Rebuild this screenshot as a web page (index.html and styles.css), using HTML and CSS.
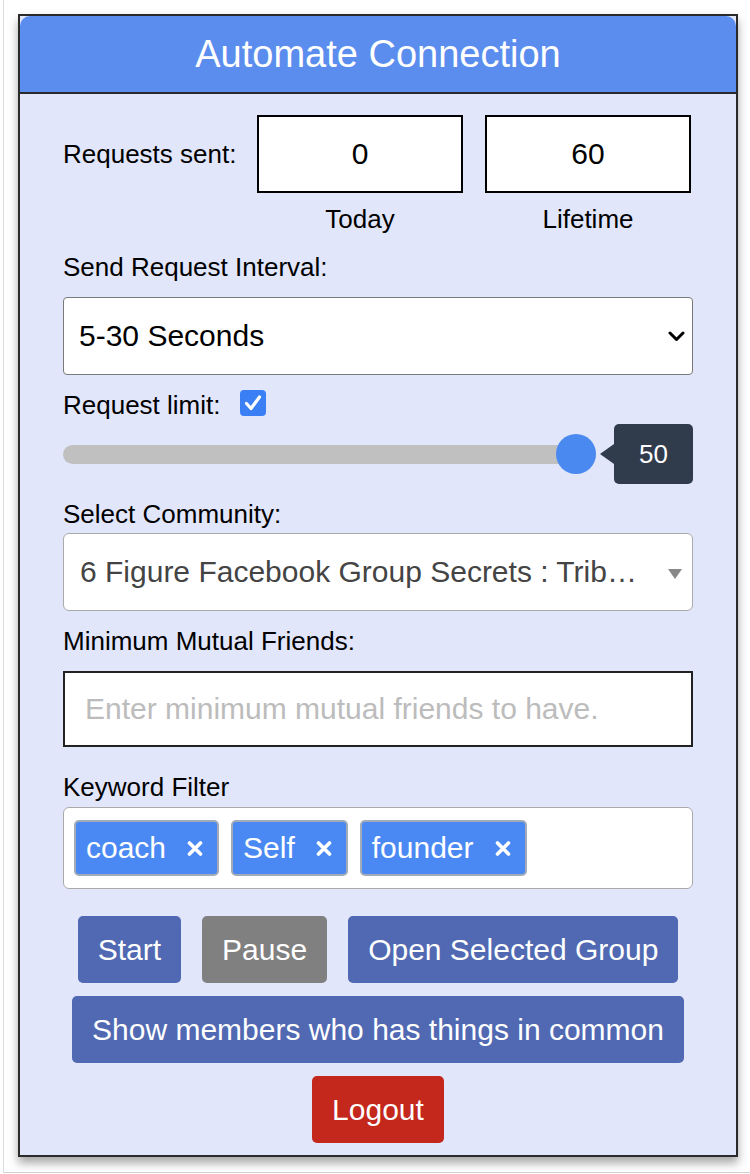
FILE: index.html
```html
<!DOCTYPE html>
<html>
<head>
<meta charset="utf-8">
<title>Automate Connection</title>
<link rel="stylesheet" href="styles.css">
</head>
<body>
<div class="page">
  <div class="panel">
    <div class="header">Automate Connection</div>
    <div class="content">
      <div class="sent-row">
        <span class="label sent-label">Requests sent:</span>
        <div class="count-box">0</div>
        <div class="count-box">60</div>
      </div>
      <div class="caption-row">
        <span class="caption">Today</span>
        <span class="caption">Lifetime</span>
      </div>

      <div class="label label-interval">Send Request Interval:</div>
      <div class="select">
        <span>5-30 Seconds</span>
        <svg class="chevron" width="17" height="11" viewBox="0 0 17 11"><polyline points="2,2 8.5,8.5 15,2" fill="none" stroke="#000" stroke-width="3" stroke-linecap="round" stroke-linejoin="round"/></svg>
      </div>

      <div class="limit-row">
        <span class="label">Request limit:</span>
        <svg class="checkbox" width="26" height="26" viewBox="0 0 26 26"><rect x="0" y="0" width="26" height="26" rx="4" fill="#3b7ff4"/><polyline points="6.5,13.5 11,18.5 19.5,7" fill="none" stroke="#fff" stroke-width="3.2" stroke-linecap="round" stroke-linejoin="round"/></svg>
      </div>

      <div class="slider-row">
        <div class="track"><div class="thumb"></div></div>
        <div class="tip">
          <div class="tip-arrow"></div>
          <div class="tip-box">50</div>
        </div>
      </div>

      <div class="label label-community">Select Community:</div>
      <div class="select2">
        <span>6 Figure Facebook Group Secrets : Trib…</span>
        <span class="caret"></span>
      </div>

      <div class="label label-mutual">Minimum Mutual Friends:</div>
      <div class="text-input"><span class="placeholder">Enter minimum mutual friends to have.</span></div>

      <div class="label label-keyword">Keyword Filter</div>
      <div class="tags">
        <span class="chip">coach<svg class="x" width="16" height="15" viewBox="0 0 16 15"><path d="M2.5 2 L13.5 13 M13.5 2 L2.5 13" stroke="#fff" stroke-width="3.6" stroke-linecap="round"/></svg></span>
        <span class="chip">Self<svg class="x" width="16" height="15" viewBox="0 0 16 15"><path d="M2.5 2 L13.5 13 M13.5 2 L2.5 13" stroke="#fff" stroke-width="3.6" stroke-linecap="round"/></svg></span>
        <span class="chip">founder<svg class="x" width="16" height="15" viewBox="0 0 16 15"><path d="M2.5 2 L13.5 13 M13.5 2 L2.5 13" stroke="#fff" stroke-width="3.6" stroke-linecap="round"/></svg></span>
      </div>

      <div class="btn-row btn-row-first">
        <button class="btn btn-blue">Start</button>
        <button class="btn btn-grey">Pause</button>
        <button class="btn btn-blue">Open Selected Group</button>
      </div>
      <div class="btn-row">
        <button class="btn btn-blue">Show members who has things in common</button>
      </div>
      <div class="btn-row">
        <button class="btn btn-red">Logout</button>
      </div>
    </div>
  </div>
</div>
</body>
</html>
```

FILE: styles.css
```css
html, body {
  margin: 0;
  padding: 0;
  background: #ffffff;
  overflow: hidden;
}

body {
  font-family: "Liberation Sans", Arial, Helvetica, sans-serif;
  color: #000;
}

.page {
  box-sizing: border-box;
  height: 1173px;
  margin-left: 3px;
  border-left: 1px solid #dcdcdc;
  border-bottom: 1px solid #d0d0d0;
  padding: 14px 0 0 14px;
}

.panel {
  box-sizing: border-box;
  width: 720px;
  border: 2px solid #2a2a2a;
  background: #e1e6fb;
  box-shadow: 0 6px 9px rgba(0, 0, 0, 0.35);
}

.header {
  height: 76px;
  background: #5b8dee;
  border-radius: 10px 10px 0 0;
  border-bottom: 2px solid #2a2a2a;
  color: #fff;
  font-size: 38px;
  line-height: 76px;
  text-align: center;
}

.content {
  padding: 21px 43px 12px;
}

.label {
  font-size: 26px;
  line-height: 30px;
  color: #000;
  white-space: nowrap;
}

.sent-row {
  display: flex;
  align-items: center;
  gap: 22px;
}

.sent-label {
  width: 172px;
  flex: none;
}

.count-box {
  box-sizing: border-box;
  width: 206px;
  height: 78px;
  border: 2px solid #000;
  background: #fff;
  font-size: 30px;
  display: flex;
  align-items: center;
  justify-content: center;
}

.caption-row {
  display: flex;
  gap: 22px;
  padding-left: 194px;
  margin-top: 11px;
}

.caption {
  width: 206px;
  text-align: center;
  font-size: 26px;
  line-height: 30px;
}

.label-interval { margin-top: 18px; }

.select {
  box-sizing: border-box;
  margin-top: 15px;
  height: 78px;
  border: 1.5px solid #7a7a7a;
  border-radius: 4px;
  background: #fff;
  display: flex;
  align-items: center;
  justify-content: space-between;
  padding: 0 7px 0 15px;
  font-size: 30px;
}

.limit-row {
  margin-top: 15px;
  display: flex;
  align-items: flex-start;
  gap: 19px;
  height: 30px;
}

.checkbox {
  display: block;
  flex: none;
}

.slider-row {
  margin-top: 4px;
  height: 60px;
  display: flex;
  align-items: center;
}

.track {
  flex: 1;
  height: 19px;
  border-radius: 10px;
  background: #c0c0c0;
  display: flex;
  align-items: center;
  justify-content: flex-end;
}

.thumb {
  flex: none;
  width: 40px;
  height: 40px;
  border-radius: 50%;
  background: #4a89f0;
}

.tip {
  display: flex;
  align-items: center;
  margin-left: 4px;
}

.tip-arrow {
  width: 0;
  height: 0;
  border-top: 10px solid transparent;
  border-bottom: 10px solid transparent;
  border-right: 14px solid #303b4c;
}

.tip-box {
  width: 79px;
  height: 60px;
  border-radius: 5px;
  background: #303b4c;
  color: #fff;
  font-size: 26px;
  display: flex;
  align-items: center;
  justify-content: center;
}

.label-community { margin-top: 15px; }

.select2 {
  box-sizing: border-box;
  margin-top: 4px;
  height: 78px;
  border: 1.5px solid #aaaaaa;
  border-radius: 6px;
  background: #fff;
  display: flex;
  align-items: center;
  justify-content: space-between;
  padding: 0 10px 0 16px;
  font-size: 30px;
  color: #444;
  white-space: nowrap;
}

.caret {
  width: 0;
  height: 0;
  border-left: 7px solid transparent;
  border-right: 7px solid transparent;
  border-top: 10px solid #888;
  margin-top: 4px;
}

.label-mutual { margin-top: 15px; }

.text-input {
  box-sizing: border-box;
  margin-top: 15px;
  height: 76px;
  border: 2px solid #222;
  background: #fff;
  padding: 0 20px;
  display: flex;
  align-items: center;
  font-size: 30px;
}

.placeholder {
  color: #bcbcbc;
  white-space: nowrap;
}

.label-keyword { margin-top: 25px; }

.tags {
  box-sizing: border-box;
  margin-top: 5px;
  height: 82px;
  border: 1.5px solid #aaaaaa;
  border-radius: 6px;
  background: #fff;
  padding: 0 10px;
  display: flex;
  align-items: center;
  gap: 12px;
}

.chip {
  box-sizing: border-box;
  height: 56px;
  border: 2px solid #a4abb8;
  border-radius: 5px;
  background: #4a89f3;
  color: #fff;
  font-size: 30px;
  display: flex;
  align-items: center;
  gap: 21px;
  padding: 0 14px 0 10px;
  white-space: nowrap;
}

.x {
  display: block;
  flex: none;
}

.btn-row {
  margin-top: 13px;
  display: flex;
  justify-content: center;
  gap: 21px;
}

.btn-row-first {
  margin-top: 27px;
}

.btn {
  height: 67px;
  padding: 0 20px;
  border: none;
  border-radius: 5px;
  color: #fff;
  font-family: "Liberation Sans", Arial, Helvetica, sans-serif;
  font-size: 30px;
  white-space: nowrap;
  display: flex;
  align-items: center;
  justify-content: center;
}

.btn-blue { background: #5069b2; }
.btn-grey { background: #808080; }
.btn-red { background: #c4271c; }
```
